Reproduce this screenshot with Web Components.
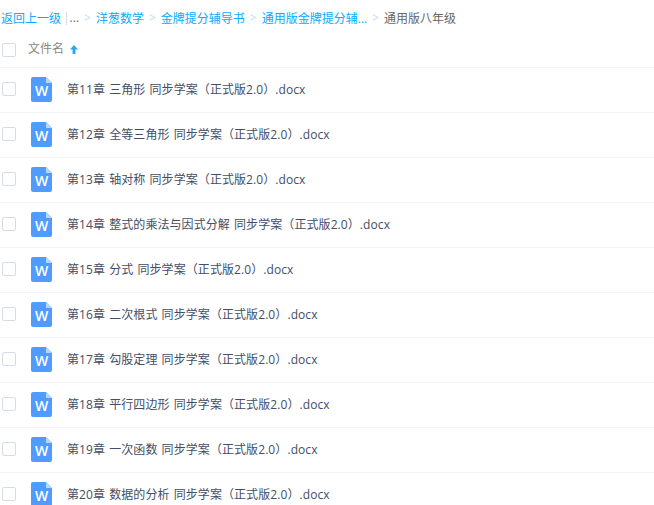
<!DOCTYPE html>
<html lang="zh">
<head>
<meta charset="utf-8">
<title>通用版八年级</title>
<style>
  html, body { margin: 0; background: #fff; overflow: hidden; }
  body { font: 12px "Open Sans", "Noto Sans CJK SC", sans-serif; color: #424e67; }
</style>
</head>
<body>

<file-list>
  <bread-crumbs slot="crumbs">
    <a>返回上一级</a><i class="bar">|</i><span class="dots">...</span>
    <i>&gt;</i><a>洋葱数学</a>
    <i>&gt;</i><a>金牌提分辅导书</a>
    <i>&gt;</i><a>通用版金牌提分辅...</a>
    <i>&gt;</i><span>通用版八年级</span>
  </bread-crumbs>
  <file-row>第11章 三角形 同步学案（正式版2.0）.docx</file-row>
  <file-row>第12章 全等三角形 同步学案（正式版2.0）.docx</file-row>
  <file-row>第13章 轴对称 同步学案（正式版2.0）.docx</file-row>
  <file-row>第14章 整式的乘法与因式分解 同步学案（正式版2.0）.docx</file-row>
  <file-row>第15章 分式 同步学案（正式版2.0）.docx</file-row>
  <file-row>第16章 二次根式 同步学案（正式版2.0）.docx</file-row>
  <file-row>第17章 勾股定理 同步学案（正式版2.0）.docx</file-row>
  <file-row>第18章 平行四边形 同步学案（正式版2.0）.docx</file-row>
  <file-row>第19章 一次函数 同步学案（正式版2.0）.docx</file-row>
  <file-row>第20章 数据的分析 同步学案（正式版2.0）.docx</file-row>
</file-list>

<script>
class FileList extends HTMLElement {
  constructor() {
    super();
    this.attachShadow({ mode: "open" });
    this.shadowRoot.innerHTML = `
    <style>
    :host { display: block; height: 505px; overflow: hidden; }
    .head {
      height: 37px;
      display: flex;
      align-items: center;
      gap: 12px;
      padding: 0 0 1px 2px;
      box-sizing: border-box;
      color: #888;
    }
    .head check-box { margin-top: 4px; }
    .sort { display: flex; align-items: center; gap: 6px; }
    .sort svg { width: 8px; height: 9px; margin-top: 2px; }
    </style>
    <slot name="crumbs"></slot>
    <div class="head">
      <check-box></check-box>
      <div class="sort">
        <span>文件名</span>
        <svg viewBox="0 0 8 9"><path d="M4 0 8 4.5H5.4V9H2.6V4.5H0z" fill="#2aa4f4"/></svg>
      </div>
    </div>
    <slot></slot>
    `;
  }
}

class BreadCrumbs extends HTMLElement {
  constructor() {
    super();
    this.attachShadow({ mode: "open" });
    this.shadowRoot.innerHTML = `
    <style>
    :host {
      display: flex;
      align-items: center;
      height: 30px;
      padding: 5px 0 0 1px;
      box-sizing: border-box;
      white-space: nowrap;
      color: #666;
    }
    ::slotted(a) { color: #09aaff; }
    ::slotted(i) {
      font-style: normal;
      color: #c5d8f3;
      margin: 0 5px 0 5px;
    }
    ::slotted(i.bar) { margin: 0 0 0 2px; color: #c9d6e6; }
    </style>
    <slot></slot>
    `;
  }
}

class CheckBox extends HTMLElement {
  constructor() {
    super();
    this.attachShadow({ mode: "open" });
    this.shadowRoot.innerHTML = `
    <style>
    :host {
      display: block;
      flex: none;
      width: 14px;
      height: 14px;
      box-sizing: border-box;
      border: 1px solid #d5dce8;
      border-radius: 2px;
    }
    </style>
    `;
  }
}

class FileRow extends HTMLElement {
  constructor() {
    super();
    this.attachShadow({ mode: "open" });
    this.shadowRoot.innerHTML = `
    <style>
    :host {
      display: flex;
      align-items: center;
      height: 45px;
      box-sizing: border-box;
      border-top: 1px solid #f3f4f7;
      padding: 0 0 2px 2px;
      white-space: nowrap;
      word-spacing: .9px;
      letter-spacing: .08px;
    }
    svg { width: 21px; height: 25px; margin: 1px 15px 0 15px; flex: none; }
    text { font: 600 14px "Open Sans", sans-serif; fill: #fff; letter-spacing: 0; }
    </style>
    <check-box></check-box>
    <svg viewBox="0 0 21 25">
      <path d="M2 0H15L21 6V23A2 2 0 0 1 19 25H2A2 2 0 0 1 0 23V2A2 2 0 0 1 2 0Z" fill="#4f9bff"/>
      <path d="M15 0 21 6H15Z" fill="#b7d6ff"/>
      <text x="10.5" y="19" text-anchor="middle">W</text>
    </svg>
    <span><slot></slot></span>
    `;
  }
}

customElements.define("file-list", FileList);
customElements.define("bread-crumbs", BreadCrumbs);
customElements.define("check-box", CheckBox);
customElements.define("file-row", FileRow);
</script>
</body>
</html>
